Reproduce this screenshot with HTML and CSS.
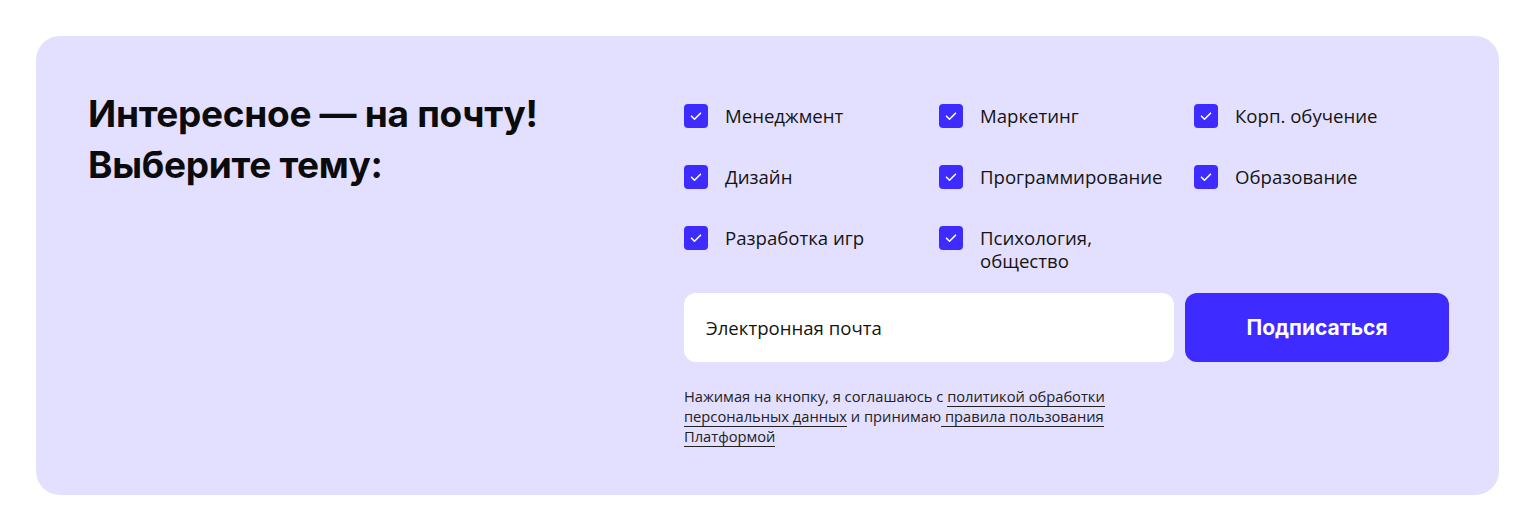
FILE: index.html
```html
<!DOCTYPE html>
<html lang="ru">
<head>
    <meta charset="UTF-8">
    <meta name="viewport" content="width=device-width, initial-scale=1.0">
    <title>Подписка на рассылку</title>
    <link rel="stylesheet" href="styles.css">
</head>
<body>
    <section class="subscribe">
        <h2 class="subscribe-title">Интересное — на почту!<br>Выберите тему:</h2>

        <form class="subscribe-form">
            <div class="topics">
                <label class="topic"><input type="checkbox" checked><span class="box"><svg viewBox="0 0 24 24"><path d="M7.5 12.2l3 3 6-6"/></svg></span><span class="topic-name">Менеджмент</span></label>
                <label class="topic"><input type="checkbox" checked><span class="box"><svg viewBox="0 0 24 24"><path d="M7.5 12.2l3 3 6-6"/></svg></span><span class="topic-name">Маркетинг</span></label>
                <label class="topic"><input type="checkbox" checked><span class="box"><svg viewBox="0 0 24 24"><path d="M7.5 12.2l3 3 6-6"/></svg></span><span class="topic-name">Корп. обучение</span></label>
                <label class="topic"><input type="checkbox" checked><span class="box"><svg viewBox="0 0 24 24"><path d="M7.5 12.2l3 3 6-6"/></svg></span><span class="topic-name">Дизайн</span></label>
                <label class="topic"><input type="checkbox" checked><span class="box"><svg viewBox="0 0 24 24"><path d="M7.5 12.2l3 3 6-6"/></svg></span><span class="topic-name">Программирование</span></label>
                <label class="topic"><input type="checkbox" checked><span class="box"><svg viewBox="0 0 24 24"><path d="M7.5 12.2l3 3 6-6"/></svg></span><span class="topic-name">Образование</span></label>
                <label class="topic"><input type="checkbox" checked><span class="box"><svg viewBox="0 0 24 24"><path d="M7.5 12.2l3 3 6-6"/></svg></span><span class="topic-name">Разработка игр</span></label>
                <label class="topic"><input type="checkbox" checked><span class="box"><svg viewBox="0 0 24 24"><path d="M7.5 12.2l3 3 6-6"/></svg></span><span class="topic-name">Психология,<br>общество</span></label>
            </div>

            <div class="subscribe-row">
                <input class="email" type="email" placeholder="Электронная почта">
                <button class="submit" type="submit">Подписаться</button>
            </div>

            <p class="agree">Нажимая на кнопку, я соглашаюсь с <a href="#">политикой обработки</a> <a href="#">персональных данных</a> и принимаю<a href="#"> правила пользования</a> <a href="#">Платформой</a></p>
        </form>
    </section>
</body>
</html>
```

FILE: styles.css
```css
body {
    margin: 0;
    background: #fff;
    font-family: "Open Sans", Roboto, sans-serif;
    color: #111;
}
.subscribe {
    box-sizing: border-box;
    width: 1463px;
    height: 459px;
    margin: 36px 0 0 36px;
    padding: 52px 50px 0 52px;
    background-color: #e3dfff;
    border-radius: 24px;
    display: grid;
    grid-template-columns: 1fr 765px;
}
.subscribe-title {
    margin: 0;
    font-family: Inter, Roboto, sans-serif;
    font-size: 37px;
    line-height: 51px;
    font-weight: 700;
    letter-spacing: -0.3px;
    color: #0b0b0b;
}
.subscribe-form {
    padding-top: 16px;
}
.topics {
    display: grid;
    grid-template-columns: repeat(3, 255px);
    row-gap: 13px;
}
.topic {
    display: flex;
    align-items: flex-start;
    gap: 17px;
    min-height: 48px;
    font-size: 18.6px;
    line-height: 23px;
    color: #141414;
    cursor: pointer;
}
.topic input {
    display: none;
}
.box {
    flex: none;
    width: 24px;
    height: 24px;
    border-radius: 4px;
    background-color: #3d2bff;
    display: flex;
    align-items: center;
    justify-content: center;
}
.box svg {
    width: 24px;
    height: 24px;
    fill: none;
    stroke: #fff;
    stroke-width: 1.6;
    stroke-linecap: round;
    stroke-linejoin: round;
}
.subscribe-row {
    display: flex;
    gap: 11px;
    margin-top: 19px;
}
.email {
    box-sizing: border-box;
    width: 490px;
    height: 69px;
    padding: 0 22px;
    border: none;
    border-radius: 12px;
    background: #fff;
    font-family: inherit;
    font-size: 18.6px;
    color: #111;
    outline: none;
}
.email::placeholder {
    color: #141414;
}
.submit {
    flex: 1;
    height: 69px;
    border: none;
    border-radius: 12px;
    background-color: #3d2bff;
    color: #fff;
    font-family: Inter, Roboto, sans-serif;
    font-size: 21px;
    font-weight: 700;
    cursor: pointer;
}
.agree {
    width: 440px;
    margin: 24px 0 0;
    font-size: 14.7px;
    line-height: 20px;
    color: #222;
}
.agree a {
    color: #222;
    text-decoration: none;
    border-bottom: 1px solid #222;
}
```
